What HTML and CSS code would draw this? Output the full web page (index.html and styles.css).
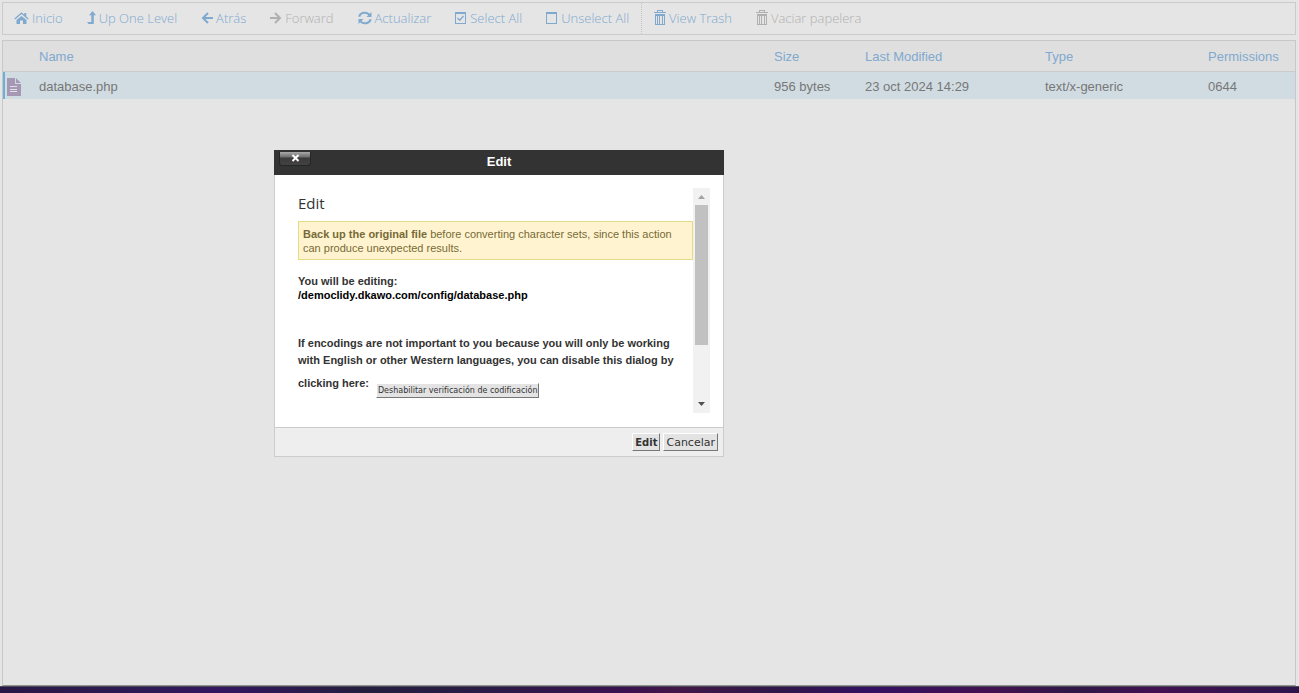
FILE: index.html
```html
<!DOCTYPE html>
<html lang="es">
<head>
<meta charset="utf-8">
<title>File Manager</title>
<link rel="stylesheet" href="styles.css">
</head>
<body>
<main class="manager">
  <nav class="toolbar" aria-label="Actions">
    <button class="tool"><svg width="15" height="14" viewBox="0 0 15 14"><path d="M7.500 5 12.500 9V13H9V9.500H6V13H2.500V9z"/><path d="M.3 7.400 7.500 1.300 10.300 3.700V2h2v3.400l2.400 2-.9 1L7.500 3.100 1.200 8.400z"/></svg>Inicio</button>
    <button class="tool"><svg width="9" height="14" viewBox="0 0 9 14"><path d="M5.500 0 9 4.300H6.800V13H1.500L0 11h4.300V4.300H2z"/></svg>Up One Level</button>
    <button class="tool"><svg width="12" height="14" viewBox="0 0 12 14"><path class="stroke" d="M7 2 2 7l5 5M2 7h10"/></svg>Atrás</button>
    <button class="tool" disabled><svg width="12" height="14" viewBox="0 0 12 14"><path class="stroke" d="m5 2 5 5-5 5M10 7H0"/></svg>Forward</button>
    <button class="tool"><svg width="14" height="14" viewBox="0 0 14 14"><path class="stroke" d="M1.200 5.800C2 1.600 8 .1 11.500 3.700M12.600 8.300C11.800 12.500 5.800 13.800 2.400 10.400"/><path d="M13.500 1v5h-5zM.5 13V8h5z"/></svg>Actualizar</button>
    <button class="tool"><svg width="12" height="14" viewBox="0 0 12 14"><path class="line" d="M.5 1.500h10v11H.5zM.5 2.500h10"/><path class="tick" d="M2.500 7l2.200 2.300L8.500 5"/></svg>Select All</button>
    <button class="tool"><svg width="12" height="14" viewBox="0 0 12 14"><path class="line" d="M.5 1.500h10v11H.5zM.5 2.500h10"/></svg>Unselect All</button>
    <span class="divider"></span>
    <button class="tool"><svg width="12" height="16" viewBox="0 0 12 16"><path class="line" d="M3.500 2V.5h5V2M0 2.500h12M1.500 4.500h9v10h-9zM1 5.500h10M3.500 6v8M5.500 6v8M8.500 6v8"/></svg>View Trash</button>
    <button class="tool" disabled><svg width="12" height="16" viewBox="0 0 12 16"><path class="line" d="M3.500 2V.5h5V2M0 2.500h12M1.500 4.500h9v10h-9zM1 5.500h10M3.500 6v8M5.500 6v8M8.500 6v8"/></svg>Vaciar papelera</button>
  </nav>
  <section class="listing">
    <table class="files">
      <colgroup><col class="c-icon"><col><col class="c-size"><col class="c-date"><col class="c-type"><col class="c-perm"></colgroup>
      <thead>
        <tr><th></th><th>Name</th><th>Size</th><th>Last Modified</th><th>Type</th><th>Permissions</th></tr>
      </thead>
      <tbody>
        <tr><td class="file-icon"><svg width="14" height="18" viewBox="0 0 14 18"><path d="M0 0h8v6h6v12H0zM9 0l5 5H9z"/><path class="rules" d="M3 8.500h7M3 11.500h7M3 13.500h7"/></svg></td><td>database.php</td><td>956 bytes</td><td>23 oct 2024 14:29</td><td>text/x-generic</td><td>0644</td></tr>
      </tbody>
    </table>
  </section>
</main>
<div class="strip"></div>

<div class="dialog" role="dialog" aria-labelledby="dialog-title">
  <header class="dialog-head">
    <button class="close" aria-label="Close"><svg width="9" height="8" viewBox="0 0 9 8"><path d="m1.500 1 6 6M7.500 1l-6 6"/></svg></button>
    <span id="dialog-title">Edit</span>
  </header>
  <div class="dialog-body">
    <div class="content">
      <h1 class="title">Edit</h1>
      <p class="notice"><strong>Back up the original file</strong> before converting character sets, since this action can produce unexpected results.</p>
      <p class="target">You will be editing:<br><span class="path">/democlidy.dkawo.com/config/database.php</span></p>
      <p class="hint">If encodings are not important to you because you will only be working with English or other Western languages, you can disable this dialog by <span class="action">clicking here: <button class="btn btn-small">Deshabilitar verificación de codificación</button></span></p>
    </div>
    <div class="scrollbar" aria-hidden="true">
      <svg class="arrow up" width="17" height="17" viewBox="0 0 17 17"><path d="M5 11h7L8.500 7z"/></svg>
      <div class="thumb"></div>
      <svg class="arrow down" width="17" height="17" viewBox="0 0 17 17"><path d="M5 6h7l-3.500 4z"/></svg>
    </div>
  </div>
  <footer class="dialog-foot">
    <button class="btn btn-primary">Edit</button>
    <button class="btn">Cancelar</button>
  </footer>
</div>
</body>
</html>
```
FILE: styles.css
```css
* { box-sizing: border-box; }
body {
  margin: 0;
  height: 100vh;
  display: flex;
  flex-direction: column;
  background: #e5e5e5;
  font-family: "Liberation Sans", Arial, sans-serif;
  font-size: 13px;
  color: #777;
}
button { font: inherit; }
.manager {
  flex: 1;
  display: flex;
  flex-direction: column;
  gap: 5px;
  padding: 2px 3px 0 2px;
}
.toolbar {
  display: flex;
  height: 33px;
  border: 1px solid #cbcbcb;
}
.tool {
  display: flex;
  align-items: center;
  gap: 3px;
  padding: 0 12px 2px;
  border: 0;
  background: none;
  color: #80a9cf;
  font-family: "Open Sans", sans-serif;
  font-size: 13px;
  font-weight: 300;
  white-space: nowrap;
}
.tool:first-child { padding-left: 11px; }
.tool:disabled { color: #b0b0b0; }
.tool svg { fill: currentColor; }
.tool .stroke { fill: none; stroke: currentColor; stroke-width: 2; }
.tool .tick { fill: none; stroke: currentColor; stroke-width: 1.3; }
.tool .line {
  fill: none;
  stroke: currentColor;
  stroke-width: 1;
  shape-rendering: crispEdges;
}
.divider { border-left: 1px dotted #c4c4c4; }
.listing {
  flex: 1;
  border: 1px solid #c8c8c8;
  border-bottom-color: #909090;
}
.files {
  width: 100%;
  table-layout: fixed;
  border-collapse: separate;
  border-spacing: 0;
}
.c-icon { width: 29px; }
.c-size { width: 91px; }
.c-date { width: 180px; }
.c-type { width: 163px; }
.c-perm { width: 94px; }
.files th, .files td {
  padding: 0 7px;
  text-align: left;
  font-weight: 400;
  white-space: nowrap;
}
.files th {
  height: 31px;
  background: #dfdfdf;
  color: #80a9cf;
  border-bottom: 1px solid #cbcbcb;
}
.files td {
  height: 27px;
  padding-top: 2px;
  background: #d1dce2;
}
.files .file-icon {
  padding: 2px 0 0 2px;
  border-left: 2px solid #6bb1d4;
}
.file-icon svg { display: block; fill: #a698b5; }
.file-icon .rules { stroke: #e1e2e8; stroke-width: 1; }
.strip {
  height: 7px;
  border-top: 1px solid #4e4b58;
  background: linear-gradient(90deg, #291846 0, #2d1a53 10%, #321660 17%, #241e3d 28%, #281c45 36%, #3a1150 48%, #421648 52%, #2f1749 60%, #331062 67%, #431150 76%, #2f1747 83%, #421052 89%, #2d164b 100%);
}

.dialog {
  position: absolute;
  left: 274px;
  top: 150px;
  width: 450px;
  background: #fff;
  color: #333;
}
.dialog-head {
  position: relative;
  height: 25px;
  line-height: 23px;
  background: #333;
  color: #fff;
  text-align: center;
  font-weight: 700;
}
.close {
  position: absolute;
  left: 5px;
  top: 2px;
  width: 32px;
  height: 14px;
  padding: 0;
  display: flex;
  justify-content: center;
  border: 1px solid #222829;
  border-top: 0;
  border-radius: 0 0 3px 3px;
  background: linear-gradient(#aaa, #6b6b6b 40%, #3c3a3a 45%, #434141);
}
.close svg { margin-top: 2px; fill: none; stroke: #fff; stroke-width: 2; }
.dialog-body {
  display: flex;
  padding: 13px 13px 14px 23px;
  border: solid #ccc;
  border-width: 0 1px;
  font-size: 11px;
}
.content { flex: 1; min-width: 0; }
.title {
  margin: 5px 0 8px;
  font: 400 15px/20px "Open Sans", sans-serif;
}
.notice {
  margin: 0;
  padding: 5px 4px 4px;
  border: 1px solid #e4dc85;
  background: #fff4cf;
  color: #776a38;
  line-height: 14px;
}
.target { margin: 14px 0 33px; font-weight: 700; line-height: 14px; }
.path { color: #000; }
.hint { margin: 0; font-weight: 700; line-height: 17px; }
.action { display: flex; gap: 7px; padding-top: 6px; }
.scrollbar {
  flex: none;
  display: flex;
  flex-direction: column;
  width: 17px;
  height: 225px;
  background: #f1f1f1;
}
.arrow { fill: #a3a3a3; }
.arrow.down { margin-top: auto; fill: #505050; }
.thumb { height: 140px; margin: 0 2px; background: #c1c1c1; }
.dialog-foot {
  display: flex;
  justify-content: flex-end;
  gap: 3px;
  padding: 5px;
  border: 1px solid #ccc;
  background: #eee;
}
.btn {
  height: 18px;
  padding: 1px 2px 0;
  border: 1px solid;
  border-color: #fff #777 #777 #fff;
  background: #e3e3e3;
  color: #333;
  font: 400 11px/14px "DejaVu Sans", sans-serif;
  white-space: nowrap;
}
.btn-primary { font-size: 10px; font-weight: 700; }
.btn-small {
  height: 15px;
  margin-top: 8px;
  padding: 1px 1px 0;
  font-size: 8px;
  line-height: 12px;
}
```
